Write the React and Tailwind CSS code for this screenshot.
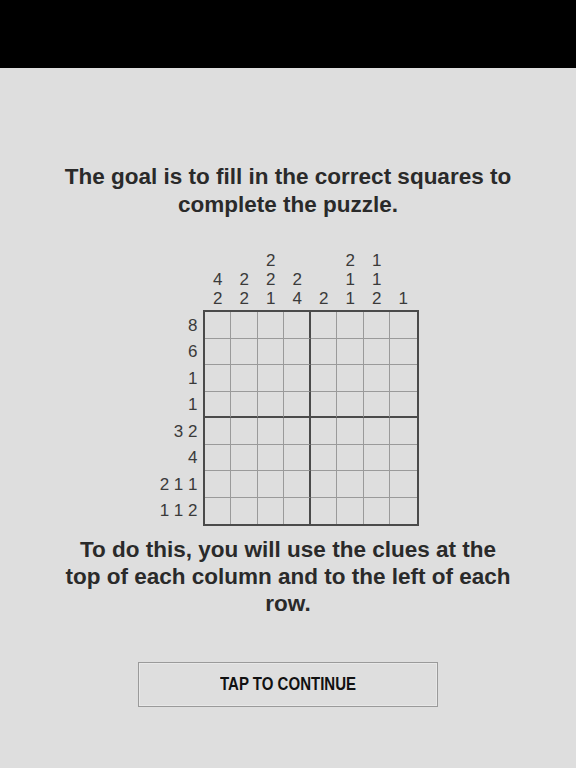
import React from "react";

const colClues = [
  ["", "4", "2"],
  ["", "2", "2"],
  ["2", "2", "1"],
  ["", "2", "4"],
  ["", "", "2"],
  ["2", "1", "1"],
  ["1", "1", "2"],
  ["", "", "1"],
];

const rowClues = ["8", "6", "1", "1", "3 2", "4", "2 1 1", "1 1 2"];

function Cell({ r, c }) {
  const right =
    c === 7 ? "" : c === 3 ? "border-r-2 border-r-[#4a4a4a]" : "border-r border-r-[#9a9a9a]";
  const bottom =
    r === 7 ? "" : r === 3 ? "border-b-2 border-b-[#4a4a4a]" : "border-b border-b-[#9a9a9a]";
  return <div className={`${right} ${bottom}`} />;
}

export default function App() {
  return (
    <div
      className="min-h-[768px] bg-[#dedede] text-[#2a2a2a]"
      style={{ fontFamily: '"Liberation Sans", Arial, sans-serif' }}
    >
      <div className="h-[68px] bg-black" />

      <h1 className="mt-[95px] px-8 text-center text-[22.5px] font-bold leading-[28px]">
        The goal is to fill in the correct squares to
        <br />
        complete the puzzle.
      </h1>

      <div className="mt-[32px] flex justify-center">
        <div className="flex">
          {/* row clues */}
          <div className="mr-[5px] flex w-[40px] flex-col pt-[59px] text-[17px] text-[#3a3a3a]">
            <div className="pt-[2px]">
              {rowClues.map((t, i) => (
                <div key={i} className="flex h-[26.5px] items-center justify-end whitespace-pre">
                  {t}
                </div>
              ))}
            </div>
          </div>

          <div className="flex flex-col">
            {/* column clues */}
            <div className="grid h-[57px] grid-cols-8 px-[2px] text-[17px] leading-[19px] text-[#3a3a3a]">
              {colClues.map((col, i) => (
                <div key={i} className="flex flex-col items-center">
                  {col.map((t, j) => (
                    <div key={j} className="h-[19px]">
                      {t}
                    </div>
                  ))}
                </div>
              ))}
            </div>
            <div className="mt-[2px] grid h-[216px] w-[216px] grid-cols-8 grid-rows-8 border-2 border-[#4a4a4a]">
              {Array.from({ length: 64 }).map((_, k) => (
                <Cell key={k} r={Math.floor(k / 8)} c={k % 8} />
              ))}
            </div>
          </div>
        </div>
      </div>

      <p className="mt-[10px] px-4 text-center text-[22.5px] font-bold leading-[27px]">
        To do this, you will use the clues at the
        <br />
        top of each column and to the left of each
        <br />
        row.
      </p>

      <div className="mt-[45px] flex justify-center">
        <button className="flex h-[45px] w-[300px] items-center justify-center border border-[#9a9a9a] bg-[#dedede] shadow-[inset_0_0_0_1px_#e8e8e8]">
          <span className="inline-block scale-x-[0.79] text-[19px] font-bold text-[#111]">
            TAP TO CONTINUE
          </span>
        </button>
      </div>
    </div>
  );
}
